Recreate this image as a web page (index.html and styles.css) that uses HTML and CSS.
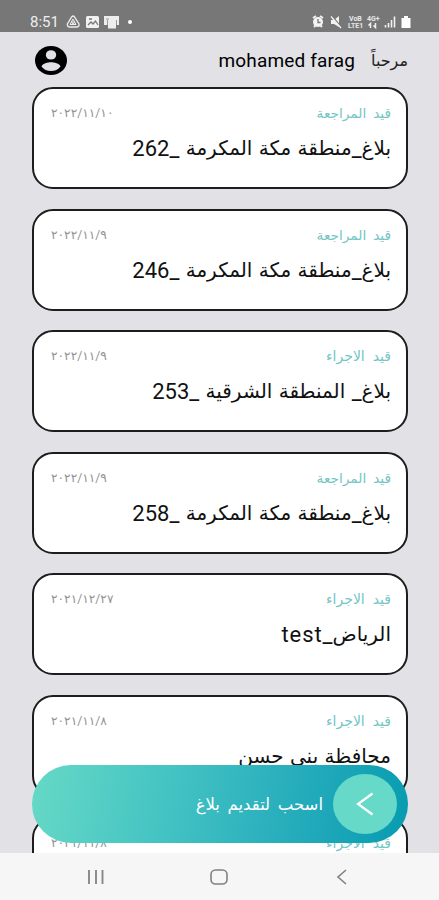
FILE: index.html
```html
<!DOCTYPE html>
<html lang="ar" dir="rtl">
<head>
<meta charset="utf-8">
<title>البلاغات</title>
<link rel="stylesheet" href="styles.css">
</head>
<body>
<div class="screen">
  <div class="status" dir="ltr">
    <span class="clock">8:51</span>
    <svg class="status-left" width="70" height="16" viewBox="0 0 70 16" fill="none" stroke="#eee" stroke-width="1.3">
      <path d="M5.500 3.200Q7 .8 8.600 3.200L13 10Q13.500 13 10.500 13H4Q1 13 1.400 10Z"/><path d="M7 5L4 10.500H10ZM5.500 8L7 10.500L8.500 8Z" stroke-width="1"/>
      <rect x="20" y="2" width="13" height="12" rx="1.500" fill="#f1f1f1" stroke="none"/><path d="M22 11l3-3 2 2 2.500-3 2.500 4M23 5h3" stroke="#777"/>
      <path d="M38 2h15v9h-3v3.500h-8V11h-4z" fill="#ededed" stroke="none"/><path d="M41.500 6v5M50.500 6v5M40 5h3" stroke="#999" stroke-width="1"/>
      <circle cx="64" cy="8" r="2" fill="#fff" stroke="none"/>
    </svg>
    <svg class="status-right" width="102" height="16" viewBox="0 0 102 16" fill="none" stroke="#f2f2f2" stroke-width="1.300">
      <circle cx="8" cy="8" r="5" fill="#f4f4f4" stroke="none"/><path d="M3 4l3-2M13 4l-3-2M4 13l2-2M12 13l-2-2" stroke-width="2"/><path d="M8 5v3.500h2.500" stroke="#777"/>
      <path d="M21 6h3l5-4v11l-5-3h-3z" fill="#f2f2f2" stroke="none"/><path d="M22 2l10 12" stroke="#777" stroke-width="1.500"/><path d="M21 2.500l10 11.500"/>
      <g class="net"><text x="39" y="7">VoB</text><text x="38" y="14">LTE1</text><text x="57" y="7">4G+</text></g>
      <path d="M60.500 14V9.500l-2 2M65.500 9v4.500l-2-2" stroke-width="1.500"/>
      <path d="M75.500 13.500v-2.500M78.500 13.500V9M81.500 13.500V6M84.500 13.500V2.500" stroke-width="1.600"/>
      <path d="M91.500 4H94V2h4v2h2.500v10h-9z" fill="#fff" stroke="none"/>
    </svg>
  </div>
  <main class="content">
    <header class="greeting">
      <span class="hello">مرحباً</span><span class="user" dir="ltr">mohamed farag</span>
      <svg class="avatar" width="32" height="29" viewBox="0 0 32 29"><ellipse cx="16" cy="14.500" rx="16" ry="14.500"/><ellipse cx="16" cy="8.900" rx="5.200" ry="4.700" fill="#e2e1e6"/><path d="M6.500 20.500C7.500 17.300 13 16.300 16 16.300S24.500 17.300 25.500 20.500Q22 25 16 25T6.500 20.500Z" fill="#e2e1e6"/></svg>
    </header>
    <section class="list">
      <article class="card"><div class="meta"><span class="state">قيد المراجعة</span><time>٢٠٢٢/١١/١٠</time></div><h2>بلاغ<span class="num">_</span>منطقة مكة المكرمة <span class="num">_262</span></h2></article>
      <article class="card"><div class="meta"><span class="state">قيد المراجعة</span><time>٢٠٢٢/١١/٩</time></div><h2>بلاغ<span class="num">_</span>منطقة مكة المكرمة <span class="num">_246</span></h2></article>
      <article class="card"><div class="meta"><span class="state action">قيد الاجراء</span><time>٢٠٢٢/١١/٩</time></div><h2>بلاغ<span class="num">_</span> المنطقة الشرقية <span class="num">_253</span></h2></article>
      <article class="card"><div class="meta"><span class="state">قيد المراجعة</span><time>٢٠٢٢/١١/٩</time></div><h2>بلاغ<span class="num">_</span>منطقة مكة المكرمة <span class="num">_258</span></h2></article>
      <article class="card"><div class="meta"><span class="state action">قيد الاجراء</span><time>٢٠٢١/١٢/٢٧</time></div><h2>الرياض<span class="num">_test</span></h2></article>
      <article class="card"><div class="meta"><span class="state action">قيد الاجراء</span><time>٢٠٢١/١١/٨</time></div><h2>محافظة بني حسن</h2></article>
      <article class="card"><div class="meta"><span class="state action">قيد الاجراء</span><time>٢٠٢١/١١/٨</time></div></article>
    </section>
    <div class="swipe">
      <span class="knob"><svg width="18" height="24" viewBox="0 0 18 24" fill="none" stroke="#fff" stroke-width="2.200"><path d="M16.500 1.500L2 12l14.500 10.500"/></svg></span>
      <span class="swipe-label">اسحب لتقديم بلاغ</span>
    </div>
  </main>
  <nav class="nav" dir="ltr">
    <svg width="18" height="16" viewBox="0 0 18 16" fill="none" stroke="#888" stroke-width="1.900"><path d="M2 1v14M9 1v14M15.500 1v14"/></svg>
    <svg width="18" height="16" viewBox="0 0 18 16" fill="none" stroke="#808080" stroke-width="1.600"><rect x="1" y="1" width="16" height="14" rx="4.500"/></svg>
    <svg width="18" height="16" viewBox="0 0 18 16" fill="none" stroke="#808080" stroke-width="1.600"><path d="M13 1L5 8l8 7"/></svg>
  </nav>
</div>
</body>
</html>
```
FILE: styles.css
```css
* { box-sizing: border-box; }
body { margin: 0; font-family: Roboto, "DejaVu Sans", sans-serif; background: #e2e1e6; }
.screen { width: 439px; height: 900px; display: flex; flex-direction: column; overflow: hidden; }
.status { height: 32px; background: #777; display: flex; align-items: center; padding: 12px 27px 0 30px; color: #eee; flex: none; }
.clock { font-size: 15px; line-height: 20px; width: 36px; }
.status-right { margin-left: auto; }
.net { font: 700 7px Roboto, sans-serif; fill: #e8e8e8; stroke: none; }
.content { height: 821px; flex: none; overflow: hidden; position: relative; background: #e2e1e6; }
.greeting { height: 55px; display: flex; align-items: center; padding: 1px 31px 0 35px; }
.hello { font-size: 16px; width: 38px; white-space: nowrap; color: #222; }
.user { font-size: 19px; letter-spacing: .15px; margin: 1px 15px 0 0; }
.avatar { margin-right: auto; }
.list { display: flex; flex-direction: column; gap: 19.6px; padding: 0 31px 0 32px; }
.card { height: 102px; flex: none; background: #fff; border: 2px solid #1d1d1f; border-radius: 21px; padding: 12px 15px 0 17px; }
.meta { display: flex; justify-content: space-between; align-items: center; height: 24px; }
.state { color: #73c5c6; font-size: 13.7px; word-spacing: 3.5px; white-space: nowrap; }
.action { font-size: 14px; word-spacing: 4.5px; }
time { color: #929292; font-size: 12.2px; }
h2 { margin: 7px 0 0; font-size: 20px; line-height: 32px; font-weight: 400; color: #111; white-space: nowrap; word-spacing: 1.4px; }
.num { font-size: 22px; letter-spacing: .9px; vertical-align: -1px; line-height: 1; }
.swipe { position: absolute; left: 32px; top: 733px; width: 376px; height: 78px; border-radius: 39px; background: linear-gradient(100deg, #66d9c6 0%, #45c4c3 35%, #2aafbd 65%, #079bb1 100%); display: flex; align-items: center; padding-right: 11px; }
.knob { width: 64px; height: 60px; border-radius: 50%; background: #66d9c8; display: flex; align-items: center; justify-content: center; }
.swipe-label { margin-right: 10px; color: #fff; font-size: 16.500px; word-spacing: 3.500px; white-space: nowrap; }
.nav { height: 47px; flex: none; background: #f6f6f6; display: flex; align-items: center; justify-content: space-between; padding: 0 88px 0 87px; }
```
